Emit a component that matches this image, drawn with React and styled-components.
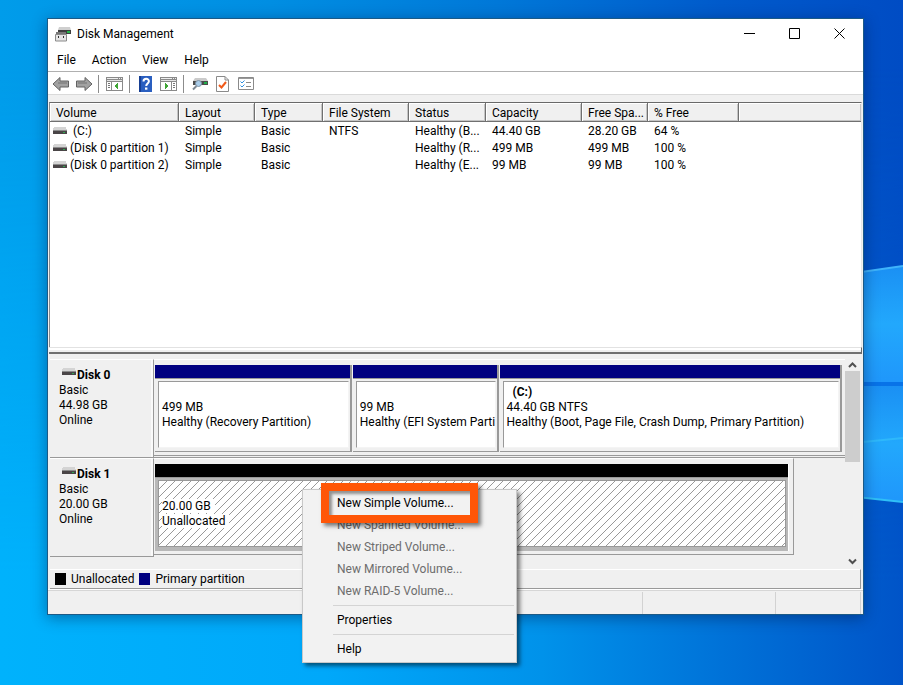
import React from "react";
import styled, { createGlobalStyle, css } from "styled-components";

const GlobalStyle = createGlobalStyle`
  *, *::before, *::after { box-sizing: border-box; }
  body { margin: 0; }
  body, button {
    font-family: "Segoe UI", Roboto, "Open Sans", sans-serif;
    font-size: 12px;
    line-height: 15px;
    color: #000;
  }
`;

/* ---------- desktop ---------- */

const Desktop = styled.div`
  position: relative;
  display: flex;
  min-height: 100vh;
  padding: 18px 39px 70px 47px;
  overflow: hidden;
`;

const WallpaperArt = styled.svg`
  position: absolute;
  inset: 0;
  width: 100%;
  height: 100%;
`;

const Wallpaper = () => (
  <WallpaperArt viewBox="0 0 903 685" preserveAspectRatio="none" aria-hidden="true">
    <defs>
      <linearGradient id="sky" x1="0" y1="0" x2="1" y2="0">
        <stop offset="0" stopColor="#009cea" />
        <stop offset="0.3" stopColor="#008ee2" />
        <stop offset="0.55" stopColor="#0078d8" />
        <stop offset="0.8" stopColor="#005acb" />
        <stop offset="1" stopColor="#004cc4" />
      </linearGradient>
      <linearGradient id="floor" x1="0" y1="0" x2="1" y2="0">
        <stop offset="0" stopColor="#00b2fc" />
        <stop offset="0.36" stopColor="#00a8fa" />
        <stop offset="0.6" stopColor="#0092ea" />
        <stop offset="0.8" stopColor="#0072d8" />
        <stop offset="1" stopColor="#0054c8" />
      </linearGradient>
      <linearGradient id="fade" x1="0" y1="0" x2="0" y2="1">
        <stop offset="0.1" stopColor="#000" />
        <stop offset="0.85" stopColor="#fff" />
      </linearGradient>
      <mask id="lower">
        <rect width="903" height="685" fill="url(#fade)" />
      </mask>
      <linearGradient id="pane" x1="0" y1="0" x2="0" y2="1">
        <stop offset="0" stopColor="#1a90f4" />
        <stop offset="0.5" stopColor="#22a8fc" />
        <stop offset="1" stopColor="#1f97fb" />
      </linearGradient>
    </defs>
    <rect width="903" height="685" fill="url(#sky)" />
    <rect width="903" height="685" fill="url(#floor)" mask="url(#lower)" />
    <path d="M700 295 903 266V382H700Z" fill="url(#pane)" />
    <path d="M700 386H903V502L700 480Z" fill="url(#pane)" />
    <path d="M700 382H903V386H700Z" fill="#0873e8" />
    <path d="M700 295 903 266" stroke="#3fb4fb" strokeWidth="2" />
    <path d="M700 480 903 502" stroke="#2fc0f8" strokeWidth="2" />
    <path d="M863 442 903 438" stroke="#2eb8fb" strokeWidth="2" />
  </WallpaperArt>
);

/* ---------- window ---------- */

const AppWindow = styled.main`
  position: relative;
  display: flex;
  flex: 1;
  flex-direction: column;
  min-width: 0;
  background: #f0f0f0;
  border: 1px solid #1c5a86;
  box-shadow: 0 3px 14px rgba(0, 20, 60, 0.42);
`;

const TitleBar = styled.header`
  display: flex;
  align-items: center;
  height: 30px;
  padding: 0 1px 0 7px;
  background: #fff;
`;

const Title = styled.h1`
  flex: 1;
  margin: 0 0 0 6px;
  font-size: 12px;
  font-weight: 400;
`;

const CaptionButton = styled.button`
  display: grid;
  place-items: center;
  align-self: flex-start;
  width: 45px;
  height: 28px;
  padding: 0;
  background: transparent;
  border: 0;
`;

const MenuBar = styled.nav`
  display: flex;
  align-items: center;
  height: 23px;
  padding-left: 1px;
  background: #fff;
  border-bottom: 1px solid #b0b0b0;
`;

const MenuButton = styled.button`
  padding: 1px 8px;
  background: transparent;
  border: 0;
`;

const ToolBar = styled.div`
  display: flex;
  align-items: center;
  height: 23px;
  padding: 1px 0 0 1px;
  background: #fff;
  border-bottom: 1px solid #dadada;
`;

const ToolButton = styled.button`
  display: grid;
  place-items: center;
  width: 23px;
  height: 20px;
  padding: 0;
  background: transparent;
  border: 0;
`;

const ToolDivider = styled.span`
  width: 1px;
  height: 18px;
  margin: 0 4px 0 3px;
  background: #8c8c8c;
`;

/* ---------- volume list ---------- */

const ListPane = styled.section`
  flex: 1;
  margin: 7px 1px 0 1px;
  background: #fff;
  border-top: 1px solid #696969;
  border-left: 1px solid #8a8a8a;
  border-right: 1px solid #e8e8e8;
  overflow: hidden;
`;

const VolumeTable = styled.table`
  width: 100%;
  table-layout: fixed;
  border-collapse: separate;
  border-spacing: 0;
`;

const ColumnHead = styled.th`
  height: 19px;
  padding: 2px 0 0 6px;
  background: #f0f0f0;
  border-right: ${(p) => (p.$last ? "0" : "1px solid #707070")};
  border-bottom: 1px solid #707070;
  box-shadow: inset 1px 1px 0 #fff, inset -1px -1px 0 #c4c4c4;
  font-weight: 400;
  text-align: left;
  white-space: nowrap;
  overflow: hidden;
`;

const Cell = styled.td`
  height: 17px;
  padding: 2px 0 0 6px;
  white-space: nowrap;
  overflow: hidden;
`;

const VolumeName = styled.span`
  display: flex;
  align-items: flex-start;
  gap: ${(p) => (p.$letter ? "6px" : "3px")};
  margin-left: -3px;
  svg { margin-top: 3px; }
`;

const Splitter = styled.div`
  height: 7px;
  margin: 0 1px;
  background: #f0f0f0;
  border-top: 1px solid #e2e2e2;
  border-right: 1px solid #696969;
  border-bottom: 2px solid #707070;
  box-shadow: inset 0 2px 0 #fff;
`;

/* ---------- disk view ---------- */

const DiskPane = styled.section`
  display: flex;
  height: 215px;
  margin: 0 2px;
  padding-top: 5px;
`;

const DiskRows = styled.div`
  flex: 1;
  min-width: 0;
`;

const DiskRow = styled.article`
  display: grid;
  grid-template-columns: 104px minmax(0, 1fr);
  height: 99px;
`;

const DiskLabel = styled.div`
  padding: 8px 0 0 9px;
  border-top: 1px solid #fff;
  border-right: 1px solid #999;
  border-bottom: 1px solid #999;
  box-shadow: inset -2px 0 0 #fafafa;
`;

const DiskName = styled.h2`
  display: flex;
  gap: 1px;
  margin: 0 0 0 3px;
  font-size: 12px;
  font-weight: 700;
  line-height: 15px;
`;

const Line = styled.p`
  margin: 0;
  white-space: nowrap;
  ${(p) => p.$strong && css`
    padding-left: 6px;
    font-weight: 700;
  `}
`;

const DiskTrack = styled.div`
  display: grid;
  grid-template-columns: minmax(0, ${(p) => p.$used}fr) ${(p) => 1000 - p.$used}fr;
  border-bottom: 1px solid ${(p) => (p.$full ? "#999" : "transparent")};
`;

const Partitions = styled.div`
  display: flex;
  height: 97px;
  padding: 5px ${(p) => (p.$full ? 3 : 4)}px 3px 0;
  border-top: 1px solid #fff;
  border-right: ${(p) => (p.$full ? "0" : "1px solid #999")};
  border-bottom: 1px solid #999;
`;

const Partition = styled.div`
  display: flex;
  flex: ${(p) => p.$share} 1 0;
  flex-direction: column;
  min-width: 0;
  padding-left: 1px;
  border-right: ${(p) => (p.$free ? "1px solid #fff" : "2px solid #999")};
`;

const PartitionCap = styled.div`
  height: 14px;
  background: ${(p) => (p.$free ? "#000" : "#000080")};
  border-bottom: 1px solid #999;
`;

const PartitionFrame = styled.div`
  display: flex;
  flex: 1;
  min-width: 0;
  padding: 2px ${(p) => (p.$free ? 2 : 1)}px 3px 3px;
  background: ${(p) => (p.$free ? "#b8b8b8" : "#f0f0f0")};
  border-bottom: 1px solid ${(p) => (p.$free ? "#b8b8b8" : "#999")};
`;

const PartitionBody = styled.div`
  flex: 1;
  min-width: 0;
  padding: ${(p) => (p.$free ? "18px 0 0 3px" : "3px 3px 0 3px")};
  overflow: hidden;
  border: 1px solid #999;
  ${(p) => !p.$free && css`
    border-right-color: #f4f4f4;
    border-bottom-color: #f4f4f4;
  `}
  background: ${(p) =>
    p.$free
      ? "linear-gradient(135deg, #fff 0 45%, #999 47% 53%, #fff 55%) 0 0 / 8px 8px"
      : "#fff"};
`;

const Backed = styled.span`
  padding-right: 4px;
  background: #fff;
`;

const ScrollBar = styled.div`
  display: flex;
  flex-direction: column;
  align-items: stretch;
  width: 16px;
  padding: 0 1px 2px 0;
  background: #f0f0f0;
`;

const ScrollButton = styled.button`
  display: grid;
  place-items: center;
  height: 12px;
  padding: 0;
  background: transparent;
  border: 0;
`;

const ScrollThumb = styled.div`
  height: 91px;
  background: #cdcdcd;
`;

const ScrollRest = styled.div`
  flex: 1;
`;

/* ---------- legend and status bar ---------- */

const Legend = styled.footer`
  display: flex;
  align-items: center;
  gap: 5px;
  height: 20px;
  margin: 0 2px;
  padding-left: 5px;
  border: 1px solid #999;
  border-top-color: #fff;
  border-left: 0;
`;

const LegendItem = styled.span`
  display: flex;
  align-items: center;
  gap: 5px;
`;

const Swatch = styled.span`
  width: 11px;
  height: 12px;
  background: ${(p) => p.$color};
`;

const StatusBar = styled.div`
  display: grid;
  grid-template-columns: 594fr 133fr 85fr;
  height: 25px;
  padding: 2px 2px 0 0;
  border-top: 1px solid #fff;
  box-shadow: inset 0 1px 0 #d6d6d6;
`;

const StatusCell = styled.span`
  border-right: 1px solid #d2d2d2;
`;

/* ---------- context menu ---------- */

const ContextMenu = styled.div`
  position: absolute;
  top: 489px;
  left: 302px;
  width: 215px;
  padding: 2px;
  background: #f2f2f2;
  border: 1px solid #c8c8c8;
  box-shadow: 3px 3px 4px rgba(0, 0, 0, 0.5);
`;

const ContextItem = styled.button`
  display: block;
  width: 100%;
  height: 22px;
  padding: 0 0 0 32px;
  background: transparent;
  border: 0;
  text-align: left;
  color: #000;
  &:disabled { color: #6d6d6d; }
`;

const ContextRule = styled.hr`
  height: 1px;
  margin: 3px 0 3px 28px;
  background: #d4d4d4;
  border: 0;
`;

const Callout = styled.div`
  position: absolute;
  top: -7px;
  left: 18px;
  width: 157px;
  height: 40px;
  border: 8px solid #ff5607;
  box-shadow: 3px 3px 4px rgba(0, 0, 0, 0.5), inset 3px 3px 3px rgba(0, 0, 0, 0.4);
  pointer-events: none;
`;

/* ---------- icons ---------- */

const DriveIcon = () => (
  <svg width="14" height="8" viewBox="0 0 14 8" shapeRendering="crispEdges" aria-hidden="true">
    <path d="M1 0H13L14 3H0Z" fill="#d4d4d4" />
    <path d="M0 3H14V7H0Z" fill="#4a4547" />
    <path d="M0 3H14V4H0Z" fill="#8b8b8b" />
    <path d="M10 5H12V6H10Z" fill="#2fa84f" />
  </svg>
);

const AppIcon = () => (
  <svg width="16" height="16" viewBox="0 0 16 16" aria-hidden="true">
    <path d="M4 1H15L16 4H3Z" fill="#cfcfcf" />
    <path d="M3 4H16V8H3Z" fill="#3e3e3e" />
    <path d="M12 5H15V7H12Z" fill="#25b34a" />
    <path d="M1 6H11V9H1Z" fill="#777" />
    <path d="M0.5 8.5H11.5V15H0.5Z" fill="#e6e6e6" stroke="#8a8a8a" />
    <path d="M3 10H4V12H3ZM8 10H9V12H8Z" fill="#333" />
  </svg>
);

const ArrowIcon = ({ forward }) => (
  <svg width="18" height="16" viewBox="0 0 18 16" aria-hidden="true">
    <path
      d={forward ? "M17 8 10 1.5V5H1.5V11H10V14.5Z" : "M1 8 8 1.5V5H16.5V11H8V14.5Z"}
      fill="#a2a2a2"
      stroke="#626262"
      strokeLinejoin="round"
    />
    <path d={forward ? "M3 7H12" : "M6 7H15"} stroke="#8a8a8a" strokeWidth="2" />
  </svg>
);

const PaneIcon = ({ flip }) => (
  <svg width="17" height="14" viewBox="0 0 17 14" shapeRendering="crispEdges" aria-hidden="true">
    <path d="M0 0H17V14H0Z" fill="#8a8a8a" />
    <path d="M1 1H12V2H1ZM13 1H14V2H13ZM15 1H16V2H15Z" fill="#eee" />
    <path d="M1 3H16V4H1Z" fill="#e4e4e4" />
    <path d="M1 5H16V13H1Z" fill="#fff" />
    {flip ? (
      <>
        <path d="M11 5H12V13H11Z" fill="#8a8a8a" />
        <path d="M13 6H15V7H13ZM13 8H15V9H13ZM13 10H15V11H13Z" fill="#777" />
        <path d="M5 6V12L9 9Z" fill="#3fa535" />
      </>
    ) : (
      <>
        <path d="M5 5H6V13H5Z" fill="#8a8a8a" />
        <path d="M2 6H4V7H2ZM2 8H4V9H2ZM2 10H4V11H2Z" fill="#777" />
        <path d="M12 6V12L8 9Z" fill="#3fa535" />
      </>
    )}
  </svg>
);

const HelpIcon = () => (
  <svg width="13" height="16" viewBox="0 0 13 16" aria-hidden="true">
    <path d="M0 0H13V16H0Z" fill="#2a5fc0" />
    <path d="M0 0H2V16H0Z" fill="#173f93" />
    <path d="M4.5 5.5C4.5 1.8 10 2 9.9 5.3C9.8 7.5 7.2 7.6 7.2 10" fill="none" stroke="#fff" strokeWidth="2" />
    <path d="M6 11.5H8.4V13.7H6Z" fill="#fff" />
  </svg>
);

const InspectIcon = () => (
  <svg width="16" height="14" viewBox="0 0 16 14" aria-hidden="true">
    <path d="M3 1H14L16 4H1Z" fill="#cbcbcb" />
    <path d="M1 4H16V8H1Z" fill="#4b4b4b" />
    <path d="M12 5H15V7H12Z" fill="#1fae4a" />
    <circle cx="6.5" cy="6.5" r="3" fill="#a9cdea" stroke="#7e93a5" />
    <path d="M4.5 9 1 12.5" stroke="#7d8994" strokeWidth="2" />
  </svg>
);

const CheckPageIcon = () => (
  <svg width="13" height="16" viewBox="0 0 13 16" aria-hidden="true">
    <path d="M0.5 0.5H9L12.5 4V15.5H0.5Z" fill="#fff" stroke="#8a8a8a" />
    <path d="M9 0.5V4H12.5" fill="none" stroke="#8a8a8a" />
    <path d="M3 9 5.5 11.5 10 6" fill="none" stroke="#f05a1a" strokeWidth="2" />
  </svg>
);

const ChecklistIcon = () => (
  <svg width="16" height="13" viewBox="0 0 16 13" aria-hidden="true">
    <path d="M0.5 0.5H15.5V12.5H0.5Z" fill="#fff" stroke="#8a8a8a" />
    <path d="M1 1.5H15" stroke="#9a9a9a" />
    <path d="M2.5 4.5 4 6 6.5 3.5M2.5 8.5 4 10 6.5 7.5" fill="none" stroke="#2d8fe0" />
    <path d="M8 5.5H13M8 9.5H13" stroke="#8a8a8a" />
  </svg>
);

const CaptionGlyph = ({ d }) => (
  <svg width="11" height="11" viewBox="0 0 11 11" aria-hidden="true">
    <path d={d} fill="none" stroke="#000" />
  </svg>
);

const Chevron = ({ d }) => (
  <svg width="9" height="7" viewBox="0 0 9 7" aria-hidden="true">
    <path d={d} fill="none" stroke="#505050" strokeWidth="2" />
  </svg>
);

/* ---------- data ---------- */

const columns = [
  ["Volume", 129],
  ["Layout", 76],
  ["Type", 68],
  ["File System", 86],
  ["Status", 77],
  ["Capacity", 96],
  ["Free Spa...", 66],
  ["% Free", 91],
];

const volumes = [
  ["(C:)", "Simple", "Basic", "NTFS", "Healthy (B...", "44.40 GB", "28.20 GB", "64 %"],
  ["(Disk 0 partition 1)", "Simple", "Basic", "", "Healthy (R...", "499 MB", "499 MB", "100 %"],
  ["(Disk 0 partition 2)", "Simple", "Basic", "", "Healthy (E...", "99 MB", "99 MB", "100 %"],
];

/* used: the part of the track that the disk fills, in thousandths */
const disks = [
  {
    name: "Disk 0",
    size: "44.98 GB",
    used: 1000,
    parts: [
      { share: 195, size: "499 MB", state: "Healthy (Recovery Partition)" },
      { share: 144, size: "99 MB", state: "Healthy (EFI System Parti" },
      {
        share: 341,
        title: "(C:)",
        size: "44.40 GB NTFS",
        state: "Healthy (Boot, Page File, Crash Dump, Primary Partition)",
      },
    ],
  },
  {
    name: "Disk 1",
    size: "20.00 GB",
    used: 926,
    parts: [{ share: 1, free: true, size: "20.00 GB", state: "Unallocated" }],
  },
];

const captions = [
  ["Minimize", "M0 5.5H11"],
  ["Maximize", "M0.5 0.5H10.5V10.5H0.5Z"],
  ["Close", "M0.5 0.5 10.5 10.5M10.5 0.5 0.5 10.5"],
];

const toolGroups = [
  [["Back", <ArrowIcon />], ["Forward", <ArrowIcon forward />]],
  [["Show console tree", <PaneIcon />]],
  [["Help topics", <HelpIcon />], ["Show action pane", <PaneIcon flip />]],
  [["Rescan disks", <InspectIcon />], ["Check", <CheckPageIcon />], ["Settings", <ChecklistIcon />]],
];

const volumeCommands = [
  ["New Simple Volume...", true],
  ["New Spanned Volume...", false],
  ["New Striped Volume...", false],
  ["New Mirrored Volume...", false],
  ["New RAID-5 Volume...", false],
];

/* ---------- views ---------- */

const VolumeList = () => (
  <ListPane>
    <VolumeTable>
      <colgroup>
        {columns.map(([name, width]) => (
          <col key={name} width={width} />
        ))}
        <col />
      </colgroup>
      <thead>
        <tr>
          {columns.map(([name]) => (
            <ColumnHead key={name} scope="col">{name}</ColumnHead>
          ))}
          <ColumnHead $last aria-hidden="true" />
        </tr>
      </thead>
      <tbody>
        {volumes.map(([name, ...rest]) => (
          <tr key={name}>
            <Cell>
              <VolumeName $letter={name === "(C:)"}>
                <DriveIcon />
                {name}
              </VolumeName>
            </Cell>
            {rest.map((value, i) => (
              <Cell key={columns[i + 1][0]}>{value}</Cell>
            ))}
            <Cell />
          </tr>
        ))}
      </tbody>
    </VolumeTable>
  </ListPane>
);

const Disk = ({ disk }) => {
  const full = disk.used === 1000;
  return (
    <DiskRow>
      <DiskLabel>
        <DiskName>
          <DriveIcon />
          {disk.name}
        </DiskName>
        <Line>Basic</Line>
        <Line>{disk.size}</Line>
        <Line>Online</Line>
      </DiskLabel>
      <DiskTrack $used={disk.used} $full={full}>
        <Partitions $full={full}>
          {disk.parts.map((part) => (
            <Partition key={part.state} $share={part.share} $free={part.free}>
              <PartitionCap $free={part.free} />
              <PartitionFrame $free={part.free}>
                <PartitionBody $free={part.free}>
                  {!part.free && <Line $strong>{part.title || "\u00a0"}</Line>}
                  <Line>{part.free ? <Backed>{part.size}</Backed> : part.size}</Line>
                  <Line>{part.free ? <Backed>{part.state}</Backed> : part.state}</Line>
                </PartitionBody>
              </PartitionFrame>
            </Partition>
          ))}
        </Partitions>
      </DiskTrack>
    </DiskRow>
  );
};

export default function App() {
  return (
    <Desktop>
      <GlobalStyle />
      <Wallpaper />
      <AppWindow>
        <TitleBar>
          <AppIcon />
          <Title>Disk Management</Title>
          {captions.map(([label, d]) => (
            <CaptionButton key={label} aria-label={label}>
              <CaptionGlyph d={d} />
            </CaptionButton>
          ))}
        </TitleBar>
        <MenuBar>
          {["File", "Action", "View", "Help"].map((label) => (
            <MenuButton key={label}>{label}</MenuButton>
          ))}
        </MenuBar>
        <ToolBar>
          {toolGroups.map((group, i) => (
            <React.Fragment key={group[0][0]}>
              {i > 0 && <ToolDivider />}
              {group.map(([label, icon]) => (
                <ToolButton key={label} aria-label={label}>{icon}</ToolButton>
              ))}
            </React.Fragment>
          ))}
        </ToolBar>
        <VolumeList />
        <Splitter />
        <DiskPane>
          <DiskRows>
            {disks.map((disk) => (
              <Disk key={disk.name} disk={disk} />
            ))}
          </DiskRows>
          <ScrollBar>
            <ScrollButton aria-label="Scroll up">
              <Chevron d="M1 5 4.5 1.5 8 5" />
            </ScrollButton>
            <ScrollThumb />
            <ScrollRest />
            <ScrollButton aria-label="Scroll down">
              <Chevron d="M1 1.5 4.5 5 8 1.5" />
            </ScrollButton>
          </ScrollBar>
        </DiskPane>
        <Legend>
          <LegendItem><Swatch $color="#000" />Unallocated</LegendItem>
          <LegendItem><Swatch $color="#000080" />Primary partition</LegendItem>
        </Legend>
        <StatusBar>
          <StatusCell />
          <StatusCell />
          <StatusCell />
        </StatusBar>
      </AppWindow>
      <ContextMenu role="menu">
        {volumeCommands.map(([label, enabled]) => (
          <ContextItem key={label} role="menuitem" disabled={!enabled}>{label}</ContextItem>
        ))}
        <ContextRule />
        <ContextItem role="menuitem">Properties</ContextItem>
        <ContextRule />
        <ContextItem role="menuitem">Help</ContextItem>
        <Callout />
      </ContextMenu>
    </Desktop>
  );
}
